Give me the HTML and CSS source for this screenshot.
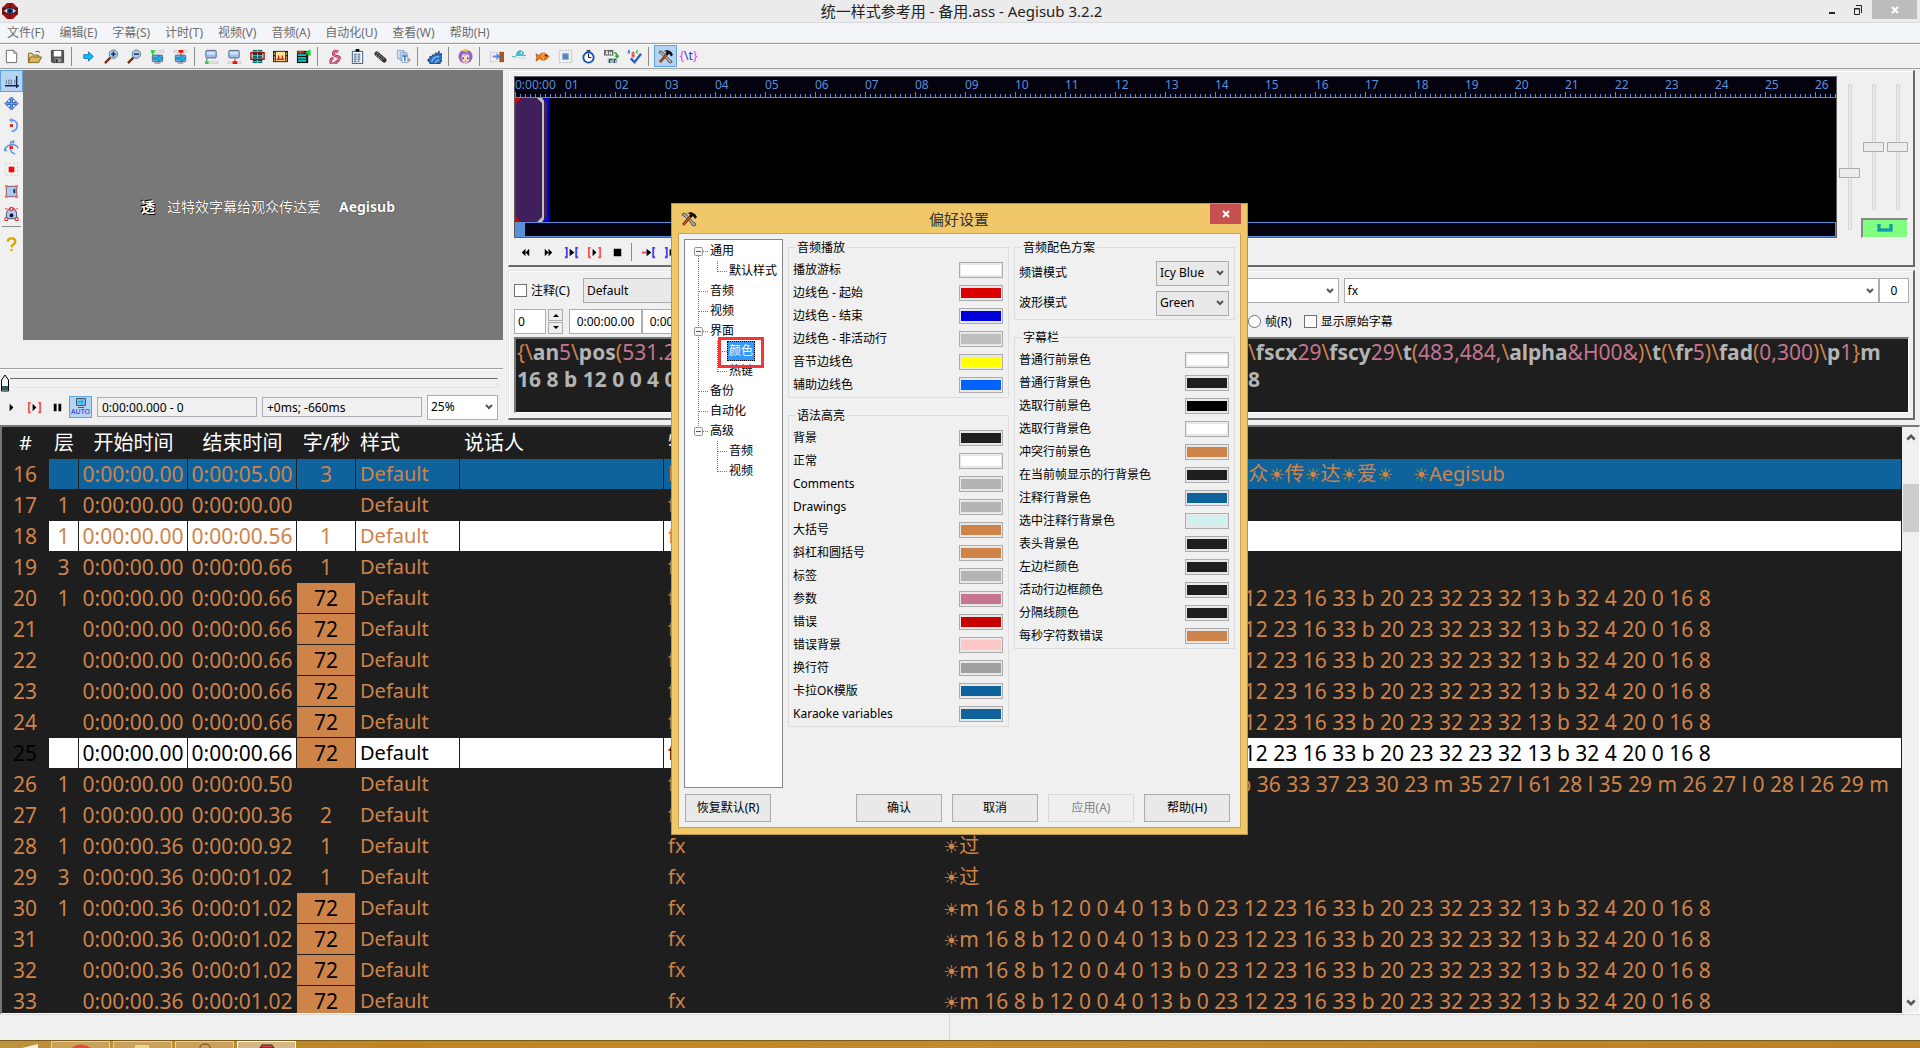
FILE: index.html
```html
<!DOCTYPE html>
<html lang="zh-CN">
<head>
<meta charset="utf-8">
<title>统一样式参考用 - 备用.ass - Aegisub 3.2.2</title>
<link rel="stylesheet" href="styles.css">
</head>
<body>
<svg class="defs" width="0" height="0" aria-hidden="true">
  <defs>
    <symbol id="tools" viewBox="0 0 16 16"><path d="M2 2l3 1 7 8 2 1 1 2-2 1-2-1-1-2-7-7-2-1z" fill="#aaa" stroke="#555"/><path d="M9 6L2 14" stroke="#8a3b12" stroke-width="3"/><path d="M9 6L2 14" stroke="#c4622a"/><path d="M6 2l4-1 4 2 2 3-2 2-2-3-2 2-2-2 1-2z" fill="#111"/></symbol>
    <symbol id="screen" viewBox="0 0 16 16"><rect x="2" y="1.500" width="11" height="8" rx="1" fill="#9fc0ea" stroke="#4d6184"/><path d="M3 3h9v3H3z" fill="#cfe2fa"/></symbol>
    <symbol id="vid" viewBox="0 0 16 16"><rect x="2.500" y="6.500" width="11" height="7" rx="1" fill="#7ba9e0" stroke="#4d6184"/><path d="M4 9h5V7l4 3-4 3v-2H4z" fill="#0cf" stroke="#047" stroke-width=".5"/><path d="M5 15h6" stroke="#667" /></symbol>
    <symbol id="chev" viewBox="0 0 8 8"><path d="M1 2l3 3 3-3" fill="none" stroke="#555" stroke-width="2"/></symbol>
    <symbol id="root" viewBox="0 0 25 20"><path d="M13.500 11v9M18 10.500h6" stroke="#777" stroke-dasharray="1 1"/><rect x="9.500" y="6.500" width="8" height="8" rx="1" fill="#f6f6f6" stroke="#919191"/><path d="M11 10.500h5" stroke="#3a56b0"/></symbol>
    <symbol id="rootm" viewBox="0 0 25 20"><path d="M13.500 0v20M18 10.500h6" stroke="#777" stroke-dasharray="1 1"/><rect x="9.500" y="6.500" width="8" height="8" rx="1" fill="#f6f6f6" stroke="#919191"/><path d="M11 10.500h5" stroke="#3a56b0"/></symbol>
    <symbol id="roote" viewBox="0 0 25 20"><path d="M13.500 0v6M18 10.500h6" stroke="#777" stroke-dasharray="1 1"/><rect x="9.500" y="6.500" width="8" height="8" rx="1" fill="#f6f6f6" stroke="#919191"/><path d="M11 10.500h5" stroke="#3a56b0"/></symbol>
    <symbol id="leaf" viewBox="0 0 25 20"><path d="M13.500 0v20M14 10.500h9" stroke="#777" stroke-dasharray="1 1"/></symbol>
    <symbol id="subm" viewBox="0 0 44 20"><path d="M13.500 0v20M32.500 0v20M33 10.500h9" stroke="#777" stroke-dasharray="1 1"/></symbol>
    <symbol id="sube" viewBox="0 0 44 20"><path d="M13.500 0v20M32.500 0v11M33 10.500h9" stroke="#777" stroke-dasharray="1 1"/></symbol>
    <symbol id="freem" viewBox="0 0 44 20"><path d="M32.500 0v20M33 10.500h9" stroke="#777" stroke-dasharray="1 1"/></symbol>
    <symbol id="freee" viewBox="0 0 44 20"><path d="M32.500 0v11M33 10.500h9" stroke="#777" stroke-dasharray="1 1"/></symbol>
  </defs>
</svg>

<header class="titlebar">
  <svg class="appicon" viewBox="0 0 16 16"><path d="M5 0h6l5 5v6l-5 5H5l-5-5V5z" fill="#a01414"/><path d="M8 0v16M0 5l16 6M0 11l16-6" stroke="#500"/><path d="M1 8q7-7 14 0-7 6-14 0z" fill="#cdd3e4" stroke="#311"/><circle cx="8" cy="8" r="3" fill="#124a9c"/><circle cx="8" cy="8" r="1.500"/></svg>
  <h1>统一样式参考用 - 备用.ass - Aegisub 3.2.2</h1>
  <div class="winctl">
    <button aria-label="最小化"><svg viewBox="0 0 12 14"><path d="M3 10h6" stroke="#222" stroke-width="2"/></svg></button>
    <button aria-label="还原"><svg viewBox="0 0 12 14"><path d="M2.500 5.500h5v6h-5zM2 6h6M4 2.500h5.500V10" fill="none" stroke="#222"/></svg></button>
    <button class="shut" aria-label="关闭"><svg viewBox="0 0 12 14"><path d="M3 4l6 6M9 4l-6 6" stroke="#fff" stroke-width="2"/></svg></button>
  </div>
</header>

<nav class="menubar">
  <button>文件(F)</button><button>编辑(E)</button><button>字幕(S)</button><button>计时(T)</button><button>视频(V)</button><button>音频(A)</button><button>自动化(U)</button><button>查看(W)</button><button>帮助(H)</button>
</nav>

<div class="toolbar" role="toolbar">
  <button aria-label="新建"><svg viewBox="0 0 16 16"><path d="M2.500 1.500h8l3 3v10h-11z" fill="#fff" stroke="#666"/><path d="M10.500 1.500v3h3" fill="#ddd" stroke="#666"/></svg></button>
  <button aria-label="打开"><svg viewBox="0 0 16 16"><path d="M1.500 14.500v-10h4l1 2h6v3" fill="#e9cf85" stroke="#7a6223"/><path d="M1.500 14.500l2-6h12l-3 6z" fill="#dcb654" stroke="#7a6223"/><path d="M9 3q3-2 5 1" fill="none" stroke="#555"/></svg></button>
  <button aria-label="保存"><svg viewBox="0 0 16 16"><path d="M1.500 1.500h13v13h-12l-1-1z" fill="#555" stroke="#444"/><path d="M4 2h8v6H4z" fill="#fff"/><path d="M5 10h7v4H5z" fill="#999"/><path d="M6 11h2v3H6z" fill="#222"/></svg></button>
  <i class="sep"></i>
  <button aria-label="跳转"><svg viewBox="0 0 16 16"><path d="M3 6h5V3l5 5-5 5v-3H3z" fill="#00c3ff" stroke="#1878b8"/></svg></button>
  <button aria-label="放大"><svg viewBox="0 0 16 16"><path d="M7 9l-6 6" stroke="#7a2d12" stroke-width="2.500"/><circle cx="10" cy="5.500" r="4.500" fill="#a8c8f0" stroke="#678"/><path d="M7.500 5.500h5M10 3v5" stroke="#124" stroke-width="1.500"/></svg></button>
  <button aria-label="缩小"><svg viewBox="0 0 16 16"><path d="M7 9l-6 6" stroke="#7a2d12" stroke-width="2.500"/><circle cx="10" cy="5.500" r="4.500" fill="#a8c8f0" stroke="#678"/><path d="M7.500 5.500h5" stroke="#124" stroke-width="1.500"/></svg></button>
  <button aria-label="视频开始"><svg viewBox="0 0 16 16"><use href="#vid"/><path d="M1 1h4v3H1zM2 4h2v2H2z" fill="#2d3"/><path d="M6 1.500h9v2H6z" fill="none" stroke="#ccc"/></svg></button>
  <button aria-label="视频结束"><svg viewBox="0 0 16 16"><use href="#vid"/><path d="M1 1.500h14v2H1z" fill="none" stroke="#ccc"/><path d="M6 1h5v3H6zM8 4h1v3H8z" fill="#e11"/></svg></button>
  <i class="sep"></i>
  <button aria-label="开始对齐视频"><svg viewBox="0 0 16 16"><use href="#screen"/><path d="M3 10v3" stroke="#555"/><path d="M1 13h4v3H1z" fill="#2d3"/><path d="M6 13.500h9v2H6z" fill="none" stroke="#ccc"/></svg></button>
  <button aria-label="结束对齐视频"><svg viewBox="0 0 16 16"><use href="#screen"/><path d="M1 13.500h14v2H1z" fill="none" stroke="#ccc"/><path d="M6 13h5v3H6zM8 10h1v3H8z" fill="#e11"/></svg></button>
  <button aria-label="选取可见行"><svg viewBox="0 0 16 16"><path d="M3 1h10v14H3z" fill="#111"/><path d="M3 2.500h10M3 7h10M3 10h10M3 13.500h10" stroke="#0cc" stroke-width="2"/><path d="M8 1v14" stroke="#6e4"/><path d="M1 4h14v7H1z" fill="none" stroke="#a11" stroke-width="1.500"/></svg></button>
  <button aria-label="对齐场景"><svg viewBox="0 0 16 16"><path d="M0 2h16v12H0z" fill="#222"/><path d="M3 3h10v10H3z" fill="#fbe29a"/><path d="M1 4h1v2H1zM1 8h1v2H1zM1 11h1v2H1zM14 4h1v2h-1zM14 8h1v2h-1zM14 11h1v2h-1z" fill="#fd8"/><path d="M4 11h8M6 7v5M10 7v5" stroke="#d22" stroke-width="1.500"/></svg></button>
  <button aria-label="平移"><svg viewBox="0 0 16 16"><path d="M1 2h12v13H1z" fill="#111"/><path d="M2 6.500h9M2 9.500h9M2 12.500h9" stroke="#0cc" stroke-width="2"/><path d="M1 2h8v3H1z" fill="#d12"/><path d="M10 4l5-3v6zM5 2v3" fill="#1c3" stroke="#1c3"/></svg></button>
  <i class="sep"></i>
  <button aria-label="样式管理器"><svg viewBox="0 0 16 16"><path d="M12 3q-4-2-5 1t4 4-1 6-6-1q0-3 3-3" fill="none" stroke="#b23a60" stroke-width="3"/><path d="M12 3q-4-2-5 1t4 4-1 6-6-1q0-3 3-3" fill="none" stroke="#f28cab"/></svg></button>
  <button aria-label="脚本属性"><svg viewBox="0 0 16 16"><path d="M2.500 2.500h11v13h-11z" fill="#fff" stroke="#357"/><path d="M6 0h4v3H6z"/><path d="M4 5.500h8M4 7.500h8M4 9.500h8M4 11.500h8M4 13.500h6" stroke="#147" stroke-dasharray="3 1"/></svg></button>
  <button aria-label="附件"><svg viewBox="0 0 16 16"><path d="M4 5l8 7" stroke="#333" stroke-width="5" stroke-linecap="round"/><path d="M4 4l8 7M3 6l7 6" stroke="#bbb" stroke-dasharray="2 1"/></svg></button>
  <button aria-label="字体收集"><svg viewBox="0 0 16 16"><path d="M1.500 1.500h7v9h-7zM4.500 3.500h7v9h-7z" fill="#d6e4f8" stroke="#8ac"/><path d="M6.500 5.500h6v9h-6z" fill="#f4f8ff" stroke="#8ac"/><path d="M7 7.500h5M9.500 7v6" stroke="#36c" stroke-width="1.500"/><path d="M13 9l3 3-3 2z" fill="#999"/></svg></button>
  <i class="sep"></i>
  <button aria-label="自动化"><svg viewBox="0 0 16 16"><path d="M1 11l2-1 0-2 2 0 1-2 2 1 1-3 2 1 2-3 0 3 3 0-1 3 2 1-2 2 1 2-2 1v2H3l0-2-2-1z" fill="#2a6fc4" stroke="#124" stroke-width=".7"/><path d="M5 14q1-6 8-6M9 15q0-3 4-3" fill="none" stroke="#7db6f4" stroke-width="1.500"/></svg></button>
  <i class="sep"></i>
  <button aria-label="助手"><svg viewBox="0 0 16 16"><circle cx="8" cy="8" r="7.500" fill="#8e67c6"/><path d="M4 1h8l-2 2H6z" fill="#ecc23e"/><path d="M4 8q0-3 4-3t4 3v3q-1 4-4 4t-4-4z" fill="#fbdac8"/><path d="M3 7q5 0 6-4 1 3 4 4l-3-1-2 1z" fill="#b596e4"/><path d="M5.500 9v2M10.500 9v2" stroke="#412a75" stroke-width="1.500"/><path d="M7 13h2" stroke="#d33"/></svg></button>
  <i class="sep"></i>
  <button aria-label="平移时间"><svg viewBox="0 0 16 16"><path d="M1.500 3v11M2 3.500h7M2 13.500h7" stroke="#aaa" stroke-dasharray="1 1"/><path d="M4 7h4V4l4 4-4 4V9H4z" fill="#4d8ff0"/><path d="M11 3h5v11h-5z" fill="#a4562c"/></svg></button>
  <button aria-label="时间后处理"><svg viewBox="0 0 16 16"><path d="M0 8q5 1 5-3 1-4 5-3 3 1 2 4-3-2-2 1h5" fill="#33c5cb" stroke="#1898a5" stroke-width=".7"/><circle cx="10" cy="4" r="1" fill="#fff"/><path d="M1 9.500h14" stroke="#bde"/></svg></button>
  <button aria-label="卡拉OK计时"><svg viewBox="0 0 16 16"><path d="M1 5l3 2q4-5 9-1l2 2-2 2q-4 4-8 0l-4 3 1-4z" fill="#ef7b18" stroke="#a54500" stroke-width=".7"/><path d="M9 5q-2 3 0 6" stroke="#fc6" fill="none"/><circle cx="12" cy="7" r="1"/></svg></button>
  <button aria-label="重采样"><svg viewBox="0 0 16 16"><path d="M1.500 1.500h13v13h-13z" fill="none" stroke="#bbb" stroke-dasharray="2 1"/><path d="M5 5h6v6H5z" fill="#4d83d5" stroke="#8ab" /></svg></button>
  <button aria-label="计时后处理"><svg viewBox="0 0 16 16"><circle cx="8" cy="9" r="5.500" fill="#fff" stroke="#1452b5" stroke-width="2"/><path d="M8 5v4h3" fill="none" stroke="#000"/><path d="M6 1h4v2H6z" fill="#444"/></svg></button>
  <button aria-label="翻译助手"><svg viewBox="0 0 16 16"><path d="M0 1h10v6H0z" fill="#666"/><path d="M2 6l1-4 1 4M6 6V3l2 3V3" stroke="#fff" fill="none"/><path d="M4 10h10v5H4z" fill="#9bb"/><path d="M6 15v-4h3M11 15v-4h2" stroke="#233" fill="none"/><path d="M11 4q3 0 3 4M12 7l2 2 2-2" stroke="#2a3" fill="none" stroke-width="1.500"/></svg></button>
  <button aria-label="拼写检查"><svg viewBox="0 0 16 16"><path d="M1 5l1-4 1 4" stroke="#27c" fill="none"/><path d="M5.500 3.500v5h2v-2h-2 2v-3z" stroke="#d33" fill="none"/><path d="M12 2q-3-1-2 2 1 1 2 0" stroke="#2a3" fill="none"/><path d="M4 10l4 4 7-9" fill="none" stroke="#2461c0" stroke-width="2.500"/></svg></button>
  <i class="sep"></i>
  <button class="on" aria-label="选项"><svg><use href="#tools"/></svg></button>
  <button class="tagbtn">{<b>\t</b>}</button>
</div>

<main class="work">
  <section class="video">
    <div class="vrow">
      <div class="vtools">
        <button class="on" aria-label="标准"><svg viewBox="0 0 16 16"><path d="M1 12.500h15M13.500 2v13" stroke="#125" stroke-width="1.500"/><path d="M2.500 6v5M5 6.500h3v4H5zM11.500 6v5" fill="none" stroke="#567" stroke-width=".8"/></svg></button>
        <button aria-label="拖动"><svg viewBox="0 0 16 16"><path d="M8 1l3 3H9v3h3V5l3 3-3 3V9H9v3h2l-3 3-3-3h2V9H4v2L1 8l3-3v2h3V4H5z" fill="#6fa0ef" stroke="#2a5bb5"/></svg></button>
        <button aria-label="旋转Z"><svg viewBox="0 0 16 16"><path d="M7 2q7 0 7 6t-6 6" fill="none" stroke="#6d9ce8" stroke-width="2"/><path d="M9 0L5 2l4 3" fill="#6d9ce8"/><path d="M6.500 6.500h3v3h-3z" fill="#e11"/></svg></button>
        <button aria-label="旋转XY"><svg viewBox="0 0 16 16"><path d="M1 10q2-5 8-5 5 0 6 4M9 1Q4 6 8 13l4 2" fill="none" stroke="#6993cf" stroke-width="1.500"/><path d="M6 2l5-2v4zM0 8v4h4z" fill="#6993cf"/><path d="M6.500 6.500h3v3h-3z" fill="#e11"/></svg></button>
        <button aria-label="缩放"><svg viewBox="0 0 16 16"><path d="M1.500 1.500h13v13h-13z" fill="none" stroke="#ccc" stroke-dasharray="2 2"/><path d="M5 5h6v6H5z" fill="#f00"/></svg></button>
        <button aria-label="矩形裁剪"><svg viewBox="0 0 16 16"><path d="M2.500 2.500h11v11h-11z" fill="#a8cbfa" stroke="#8b5a50"/><path d="M12 5q-3 0-2 2-1 3 2 3z" fill="#234"/><path d="M1 1h3v3H1zM12 1h3v3h-3zM1 12h3v3H1zM12 12h3v3h-3z" fill="#ff6f6f"/></svg></button>
        <button aria-label="矢量裁剪"><svg viewBox="0 0 16 16"><path d="M2.500 13.500V8q1-5 5.500-5 5 0 5.500 5v5.500z" fill="#a8cbfa" stroke="#446"/><path d="M1 3h14" stroke="#e33" stroke-dasharray="3 1"/><path d="M6.500 1.500h3v3h-3zM1 12.500h3v3H1zM12 12.500h3v3h-3z" fill="#fff" stroke="#e11"/><circle cx="8" cy="10" r="2" fill="#112"/></svg></button>
        <i class="hsep"></i>
        <button class="help" aria-label="帮助"><svg viewBox="0 0 16 16"><path d="M4 5q0-3.500 4-3.500T12 5q0 2-2 3-2 1-2 3M8 13v2" fill="none" stroke="#d9a400" stroke-width="2.500"/></svg></button>
      </div>
      <div class="canvas"><p><b>透</b><span>过特效字幕给观众传达爱</span><span class="lat">Aegisub</span></p></div>
    </div>
    <div class="seek">
      <svg viewBox="0 0 10 18" width="10" height="18"><path d="M1.500 6L5 1l3.500 5v11h-7z" fill="#f4f4f4" stroke="#000"/><path d="M2 12h6v4H2z" fill="#2f5f58"/></svg>
      <div class="track"></div>
    </div>
    <div class="vctl">
      <button aria-label="播放"><svg viewBox="0 0 16 16"><path d="M6 4l4 4-4 4z"/></svg></button>
      <button aria-label="播放当前行"><svg viewBox="0 0 16 16"><path d="M4 3H2v10h2M12 3h2v10h-2" fill="none" stroke="#f55" stroke-width="2"/><path d="M6 4l4 4-4 4z"/></svg></button>
      <button aria-label="暂停"><svg viewBox="0 0 16 16"><path d="M4 4h3v8H4zM9 4h3v8H9z"/></svg></button>
      <button class="on" aria-label="自动滚动"><svg viewBox="0 0 12 10"><path d="M1.500 .500h9v7h-9z" fill="#8db4e3" stroke="#456"/><path d="M3 3h3V1l3 3-3 3V5H3z" fill="#00c3ee"/><path d="M3 9.500h6" stroke="#456"/></svg><small>AUTO</small></button>
      <input class="ro" value="0:00:00.000 - 0" readonly aria-label="时间">
      <input class="ro" value="+0ms; -660ms" readonly aria-label="相对时间">
      <div class="pick zoom"><select aria-label="缩放"><option>25%</option></select><svg><use href="#chev"/></svg></div>
    </div>
  </section>

  <div class="right">
    <section class="panel audio">
      <div class="arow">
        <div class="wave">
          <div class="ruler"><span>0:00:00</span><span>01</span><span>02</span><span>03</span><span>04</span><span>05</span><span>06</span><span>07</span><span>08</span><span>09</span><span>10</span><span>11</span><span>12</span><span>13</span><span>14</span><span>15</span><span>16</span><span>17</span><span>18</span><span>19</span><span>20</span><span>21</span><span>22</span><span>23</span><span>24</span><span>25</span><span>26</span></div>
          <svg class="sel" viewBox="0 0 34 124" width="34" height="124"><path d="M0 0h34v124H0z" fill="#0000d8"/><path d="M0 0h28l4 5v114l-4 5H0z" fill="#3f1f5c"/><path d="M0 0h6L1 6v112l5 6H0z" fill="#d80000"/><path d="M22 0h5l2 3v118l-2 3h-5l5-5V5z" fill="#c0c0c0"/></svg>
          <div class="ascroll"><i></i></div>
        </div>
        <div class="sliders">
          <svg viewBox="0 0 70 162" width="70" height="162"><path d="M9.500 8.500h3v145h-3zM33.500 8.500h3v125h-3zM57.500 8.500h3v125h-3z" fill="#e7eaea" stroke="#d6d6d6"/><path d="M.5 92.500h20v9H.5zM24.500 66.500h20v9h-20zM48.500 66.500h20v9h-20z" fill="#ececec" stroke="#acacac"/></svg>
          <button class="link" aria-label="联动"><svg viewBox="0 0 16 10" width="16" height="10"><path d="M2 1v6h12V1" fill="none" stroke="#067a8c" stroke-width="3"/><path d="M2 1v6h12V1" fill="none" stroke="#00c8f0"/></svg></button>
        </div>
      </div>
      <div class="actl">
        <button aria-label="上一行"><svg viewBox="0 0 16 16"><path d="M8 4L4 8l4 4zM12 4L8 8l4 4z"/></svg></button>
        <button aria-label="下一行"><svg viewBox="0 0 16 16"><path d="M4 4l4 4-4 4zM8 4l4 4-4 4z"/></svg></button>
        <button aria-label="播放选区"><svg viewBox="0 0 16 16"><path d="M1 3h2v10H1M15 3h-2v10h2" fill="none" stroke="#44f" stroke-width="2"/><path d="M6 4l5 4-5 4z"/></svg></button>
        <button aria-label="播放行"><svg viewBox="0 0 16 16"><path d="M4 3H2v10h2M12 3h2v10h-2" fill="none" stroke="#f55" stroke-width="2"/><path d="M6 4l4 4-4 4z"/></svg></button>
        <button aria-label="停止"><svg viewBox="0 0 16 16"><path d="M4 4h8v8H4z"/></svg></button>
        <i class="sep"></i>
        <button aria-label="播放前段"><svg viewBox="0 0 16 16"><path d="M1 8h5" stroke="#f44" stroke-width="2"/><path d="M6 4l5 4-5 4z"/><path d="M15 3h-2v10h2" fill="none" stroke="#44f" stroke-width="2"/></svg></button>
        <button aria-label="播放后段"><svg viewBox="0 0 16 16"><path d="M1 3h2v10H1" fill="none" stroke="#44f" stroke-width="2"/><path d="M6 8h8" stroke="#f44" stroke-width="2"/><path d="M6 4l5 4-5 4z"/></svg></button>
      </div>
    </section>

    <section class="panel edit">
      <div class="erow">
        <label class="tick cmt"><input type="checkbox">注释(C)</label>
        <div class="pick style"><select aria-label="样式"><option>Default</option></select></div>
        <div class="pick combo"><input aria-label="说话人"><svg><use href="#chev"/></svg></div>
        <div class="pick combo effect"><input value="fx" aria-label="特效"><svg><use href="#chev"/></svg></div>
        <input class="num" value="0" aria-label="字符数">
      </div>
      <div class="erow">
        <div class="times">
          <input class="layer" value="0" aria-label="层">
          <div class="spin"><button aria-label="增加"><svg viewBox="0 0 6 4"><path d="M0 4l3-3 3 3z"/></svg></button><button aria-label="减少"><svg viewBox="0 0 6 4"><path d="M0 0l3 3 3-3z"/></svg></button></div>
          <input class="time" value="0:00:00.00" aria-label="开始时间"><input class="time" value="0:00:00.66" aria-label="结束时间">
        </div>
        <label class="tick"><input type="radio" name="unit">帧(R)</label>
        <label class="tick"><input type="checkbox">显示原始字幕</label>
      </div>
      <div class="code" role="textbox" aria-label="字幕文本" contenteditable="true" spellcheck="false">
        <div class="ln"><span><u>{\</u>an<s>5</s><u>\</u>pos<u>(</u><s>531.25,240</s><u>)</u></span><span><u>\</u>fscx<s>29</s><u>\</u>fscy<s>29</s><u>\</u>t<u>(</u><s>483,484,</s><u>\</u>alpha<s>&amp;H00&amp;</s><u>)\</u>t<u>(\</u>fr<s>5</s><u>)\</u>fad<u>(</u><s>0,300</s><u>)\</u>p<s>1</s><u>}</u>m</span></div>
        <div class="ln"><span>16 8 b 12 0 0 4 0 13 b 0 23 12 23 16 33 b 20 23 32 23 32 13 b</span><span>8</span></div>
      </div>
    </section>
  </div>
</main>

<section class="grid">
  <div class="tblwrap">
  <table>
    <colgroup><col class="c1"><col class="c2"><col class="c3"><col class="c3"><col class="c5"><col class="c6"><col class="c7"><col class="c8"><col></colgroup>
    <thead><tr><th>#</th><th>层</th><th>开始时间</th><th>结束时间</th><th>字/秒</th><th>样式</th><th>说话人</th><th>特效</th><th>文本</th></tr></thead>
    <tbody>
    <tr class="comment"><td>16</td><td></td><td>0:00:00.00</td><td>0:00:05.00</td><td>3</td><td>Default</td><td></td><td>karaoke</td><td class="han"><i>☀</i>透<i>☀</i>过<i>☀</i>特<i>☀</i>效<i>☀</i>字<i>☀</i>幕<i>☀</i>给<i>☀</i>观<i>☀</i>众<i>☀</i>传<i>☀</i>达<i>☀</i>爱<i>☀</i>　<i>☀</i>Aegisub</td></tr>
    <tr><td>17</td><td>1</td><td>0:00:00.00</td><td>0:00:00.00</td><td></td><td>Default</td><td></td><td>fx</td><td class="han"><i>☀</i></td></tr>
    <tr class="picked"><td>18</td><td>1</td><td>0:00:00.00</td><td>0:00:00.56</td><td>1</td><td>Default</td><td></td><td>fx</td><td class="han"><i>☀</i>透</td></tr>
    <tr><td>19</td><td>3</td><td>0:00:00.00</td><td>0:00:00.66</td><td>1</td><td>Default</td><td></td><td>fx</td><td class="han"><i>☀</i>透</td></tr>
    <tr><td>20</td><td>1</td><td>0:00:00.00</td><td>0:00:00.66</td><td class="hot">72</td><td>Default</td><td></td><td>fx</td><td><i>☀</i>m 16 8 b 12 0 0 4 0 13 b 0 23 12 23 16 33 b 20 23 32 23 32 13 b 32 4 20 0 16 8</td></tr>
    <tr><td>21</td><td></td><td>0:00:00.00</td><td>0:00:00.66</td><td class="hot">72</td><td>Default</td><td></td><td>fx</td><td><i>☀</i>m 16 8 b 12 0 0 4 0 13 b 0 23 12 23 16 33 b 20 23 32 23 32 13 b 32 4 20 0 16 8</td></tr>
    <tr><td>22</td><td></td><td>0:00:00.00</td><td>0:00:00.66</td><td class="hot">72</td><td>Default</td><td></td><td>fx</td><td><i>☀</i>m 16 8 b 12 0 0 4 0 13 b 0 23 12 23 16 33 b 20 23 32 23 32 13 b 32 4 20 0 16 8</td></tr>
    <tr><td>23</td><td></td><td>0:00:00.00</td><td>0:00:00.66</td><td class="hot">72</td><td>Default</td><td></td><td>fx</td><td><i>☀</i>m 16 8 b 12 0 0 4 0 13 b 0 23 12 23 16 33 b 20 23 32 23 32 13 b 32 4 20 0 16 8</td></tr>
    <tr><td>24</td><td></td><td>0:00:00.00</td><td>0:00:00.66</td><td class="hot">72</td><td>Default</td><td></td><td>fx</td><td><i>☀</i>m 16 8 b 12 0 0 4 0 13 b 0 23 12 23 16 33 b 20 23 32 23 32 13 b 32 4 20 0 16 8</td></tr>
    <tr class="picked active"><td>25</td><td></td><td>0:00:00.00</td><td>0:00:00.66</td><td class="hot">72</td><td>Default</td><td></td><td>fx</td><td><i>☀</i>m 16 8 b 12 0 0 4 0 13 b 0 23 12 23 16 33 b 20 23 32 23 32 13 b 32 4 20 0 16 8</td></tr>
    <tr><td>26</td><td>1</td><td>0:00:00.00</td><td>0:00:00.50</td><td></td><td>Default</td><td></td><td>fx</td><td><i>☀</i>m 30 23 b 23 30 23 33 27 36 b 36 33 37 23 30 23 m 35 27 l 61 28 l 35 29 m 26 27 l 0 28 l 26 29 m</td></tr>
    <tr><td>27</td><td>1</td><td>0:00:00.00</td><td>0:00:00.36</td><td>2</td><td>Default</td><td></td><td>fx</td><td class="han"><i>☀</i>过</td></tr>
    <tr><td>28</td><td>1</td><td>0:00:00.36</td><td>0:00:00.92</td><td>1</td><td>Default</td><td></td><td>fx</td><td class="han"><i>☀</i>过</td></tr>
    <tr><td>29</td><td>3</td><td>0:00:00.36</td><td>0:00:01.02</td><td>1</td><td>Default</td><td></td><td>fx</td><td class="han"><i>☀</i>过</td></tr>
    <tr><td>30</td><td>1</td><td>0:00:00.36</td><td>0:00:01.02</td><td class="hot">72</td><td>Default</td><td></td><td>fx</td><td><i>☀</i>m 16 8 b 12 0 0 4 0 13 b 0 23 12 23 16 33 b 20 23 32 23 32 13 b 32 4 20 0 16 8</td></tr>
    <tr><td>31</td><td></td><td>0:00:00.36</td><td>0:00:01.02</td><td class="hot">72</td><td>Default</td><td></td><td>fx</td><td><i>☀</i>m 16 8 b 12 0 0 4 0 13 b 0 23 12 23 16 33 b 20 23 32 23 32 13 b 32 4 20 0 16 8</td></tr>
    <tr><td>32</td><td></td><td>0:00:00.36</td><td>0:00:01.02</td><td class="hot">72</td><td>Default</td><td></td><td>fx</td><td><i>☀</i>m 16 8 b 12 0 0 4 0 13 b 0 23 12 23 16 33 b 20 23 32 23 32 13 b 32 4 20 0 16 8</td></tr>
    <tr><td>33</td><td></td><td>0:00:00.36</td><td>0:00:01.02</td><td class="hot">72</td><td>Default</td><td></td><td>fx</td><td><i>☀</i>m 16 8 b 12 0 0 4 0 13 b 0 23 12 23 16 33 b 20 23 32 23 32 13 b 32 4 20 0 16 8</td></tr>
    </tbody>
  </table>
  </div>
  <div class="vbar"><svg class="up"><use href="#chev"/></svg><i></i><svg><use href="#chev"/></svg></div>
</section>

<footer class="status"><span></span><span></span></footer>
<div class="taskbar">
  <svg viewBox="0 0 20 7"><path d="M2 7l16-4v4z" fill="#f5efe0"/></svg>
  <i><svg viewBox="0 0 20 6"><path d="M0 6q10-7 20 0z" fill="#e2493b"/></svg></i>
  <i><svg viewBox="0 0 20 6"><path d="M2 3h14v3H2z" fill="#ecd48d"/></svg></i>
  <i><svg viewBox="0 0 20 6"><path d="M5 6q0-4 5-4t5 4" fill="none" stroke="#5b4a2a"/></svg></i>
  <i class="cur"><svg viewBox="0 0 20 6"><path d="M3 6l2-3h10l2 3z" fill="#d8464a" stroke="#3a1a1a"/></svg></i>
</div>

<div class="dialog" role="dialog" aria-labelledby="dlgtitle">
  <div class="dhead"><svg><use href="#tools"/></svg><h2 id="dlgtitle">偏好设置</h2><button aria-label="关闭"><svg viewBox="0 0 12 12"><path d="M3 3l6 6M9 3l-6 6" stroke="#fff" stroke-width="2"/></svg></button></div>
  <div class="client">
    <div class="body">
      <ul class="tree">
        <li><svg><use href="#root"/></svg><span>通用</span></li>
        <li class="sub"><svg><use href="#sube"/></svg><span>默认样式</span></li>
        <li><svg><use href="#leaf"/></svg><span>音频</span></li>
        <li><svg><use href="#leaf"/></svg><span>视频</span></li>
        <li><svg><use href="#rootm"/></svg><span>界面</span></li>
        <li class="sub marked"><svg><use href="#subm"/></svg><span>颜色</span></li>
        <li class="sub"><svg><use href="#sube"/></svg><span>热键</span></li>
        <li><svg><use href="#leaf"/></svg><span>备份</span></li>
        <li><svg><use href="#leaf"/></svg><span>自动化</span></li>
        <li><svg><use href="#roote"/></svg><span>高级</span></li>
        <li class="sub"><svg><use href="#freem"/></svg><span>音频</span></li>
        <li class="sub"><svg><use href="#freee"/></svg><span>视频</span></li>
      </ul>
      <div class="col">
        <fieldset><legend>音频播放</legend>
          <label>播放游标<input type="color" value="#ffffff"></label>
          <label>边线色 - 起始<input type="color" value="#d80000"></label>
          <label>边线色 - 结束<input type="color" value="#0000d8"></label>
          <label>边线色 - 非活动行<input type="color" value="#bebebe"></label>
          <label>音节边线色<input type="color" value="#ffff00"></label>
          <label>辅助边线色<input type="color" value="#0062ff"></label>
        </fieldset>
        <fieldset><legend>语法高亮</legend>
          <label>背景<input type="color" value="#1e1e1e"></label>
          <label>正常<input type="color" value="#ffffff"></label>
          <label>Comments<input type="color" value="#b4b4b4"></label>
          <label>Drawings<input type="color" value="#b4b4b4"></label>
          <label>大括号<input type="color" value="#ce8349"></label>
          <label>斜杠和圆括号<input type="color" value="#ce8349"></label>
          <label>标签<input type="color" value="#b4b4b4"></label>
          <label>参数<input type="color" value="#c5758f"></label>
          <label>错误<input type="color" value="#c80000"></label>
          <label>错误背景<input type="color" value="#ffc8c8"></label>
          <label>换行符<input type="color" value="#a0a0a0"></label>
          <label>卡拉OK模版<input type="color" value="#0f639c"></label>
          <label>Karaoke variables<input type="color" value="#0f639c"></label>
        </fieldset>
      </div>
      <div class="col">
        <fieldset class="schemes"><legend>音频配色方案</legend>
          <label>频谱模式<span class="pick"><select><option>Icy Blue</option></select><svg><use href="#chev"/></svg></span></label>
          <label>波形模式<span class="pick"><select><option>Green</option></select><svg><use href="#chev"/></svg></span></label>
        </fieldset>
        <fieldset><legend>字幕栏</legend>
          <label>普通行前景色<input type="color" value="#ffffff"></label>
          <label>普通行背景色<input type="color" value="#1e1e1e"></label>
          <label>选取行前景色<input type="color" value="#000000"></label>
          <label>选取行背景色<input type="color" value="#ffffff"></label>
          <label>冲突行前景色<input type="color" value="#ce8349"></label>
          <label>在当前帧显示的行背景色<input type="color" value="#1e1e1e"></label>
          <label>注释行背景色<input type="color" value="#0f639c"></label>
          <label>选中注释行背景色<input type="color" value="#d3eeee"></label>
          <label>表头背景色<input type="color" value="#1e1e1e"></label>
          <label>左边栏颜色<input type="color" value="#1e1e1e"></label>
          <label>活动行边框颜色<input type="color" value="#1e1e1e"></label>
          <label>分隔线颜色<input type="color" value="#1e1e1e"></label>
          <label>每秒字符数错误<input type="color" value="#ce8349"></label>
        </fieldset>
      </div>
    </div>
    <div class="btns"><button class="reset">恢复默认(R)</button><button>确认</button><button>取消</button><button disabled>应用(A)</button><button>帮助(H)</button></div>
  </div>
</div>
</body>
</html>
```
FILE: styles.css
```css
*, *::before, *::after { box-sizing: border-box; }
body {
  margin: 0; height: 100vh; overflow: hidden;
  display: flex; flex-direction: column;
  background: #f0f0f0; color: #000;
  font: 12px/16px "Noto Sans", "Noto Sans CJK SC", sans-serif;
}
h1, h2, p, ul { margin: 0; padding: 0; font-weight: normal; }
button, input, select { font: inherit; color: inherit; margin: 0; border-radius: 0; }
button { padding: 0; border: 0; background: none; }
.defs { position: absolute; }

/* window frame */
.titlebar { display: flex; height: 22px; flex: none; background: #ebebeb; align-items: center; }
.appicon { width: 16px; height: 16px; margin: 0 0 0 2px; }
.titlebar h1 { flex: 1; text-align: center; font-size: 15px; line-height: 22px; padding-left: 86px; color: #222; }
.winctl { display: flex; height: 22px; align-items: flex-start; padding-right: 3px; }
.winctl button { width: 26px; height: 19px; }
.winctl .shut { width: 45px; background: #bcbcbc; margin-left: 1px; }
.winctl svg { width: 12px; height: 14px; display: block; margin: 2px auto; }
.menubar { display: flex; flex: none; height: 21px; background: #f4f5f8; border-top: 1px solid #d9dadd; border-bottom: 1px solid #e8e8e8; }
.menubar button { padding: 0 8px 0 7px; color: #6d6d6d; line-height: 19px; }

.toolbar { display: flex; flex: none; height: 26px; border-top: 1px solid #a0a0a0; border-bottom: 1px solid #a0a0a0; box-shadow: inset 0 1px #fff; padding-top: 1px; }
.toolbar button, .vtools button, .vctl button, .actl button { width: 23px; height: 22px; flex: none; display: flex; align-items: center; justify-content: center; }
.toolbar svg, .vtools svg, .vctl button svg, .actl svg { width: 15px; height: 15px; }
.toolbar .on, .vtools .on, .vctl .on { background: #b5d3f3; border: 1px solid #5fa2e4; }
.sep { width: 8px; flex: none; margin: 2px 0; background: linear-gradient(#8c8c8c, #8c8c8c) 2px 0 / 1px 100% no-repeat; }
.toolbar .tagbtn { color: #f3f; }
.tagbtn b { color: #33c; font-weight: normal; }

/* video and audio */
.work { display: flex; flex: none; height: 354px; gap: 5px; padding-right: 5px; margin-top: 1px; }
.video { width: 503px; flex: none; }
.vrow { display: flex; height: 270px; }
.vtools { width: 23px; flex: none; }
.hsep { display: block; height: 1px; margin: 2px 2px 6px; background: #8c8c8c; }
.canvas { flex: 1; background: #787878; color: #fff; display: flex; align-items: center; justify-content: center; padding: 4px 0 0 10px; }
.canvas p { font-size: 14px; text-shadow: 0 0 1px #000; white-space: nowrap; }
.canvas b { margin-right: 12px; text-shadow: 1px 1px #000, -1px -1px #000; }
.canvas .lat { margin-left: 18px; font-weight: bold; }
.seek { display: flex; margin-top: 28px; border-top: 1px solid #a0a0a0; padding: 5px 5px 0 0; height: 28px; box-shadow: inset 0 1px #fff; }
.track { flex: 1; height: 10px; margin-top: 4px; border: 1px solid #e3e3e3; border-top-color: #696969; border-left: 0; }
.vctl { display: flex; padding: 0 5px 0 0; align-items: center; height: 22px; }
.vctl .on { flex-direction: column; }
.vctl .on svg { width: 12px; height: 10px; flex: none; }
.vctl small { font-size: 7px; line-height: 8px; color: #22d; }
.ro { flex: 1; min-width: 0; height: 20px; margin-left: 5px; padding: 0 4px; border: 1px solid #abadb3; background: #f0f0f0; }
.pick { display: flex; align-items: center; height: 25px; border: 1px solid #acacac; background: #fff; }
.pick select, .pick input { appearance: none; flex: 1; min-width: 0; height: 23px; border: 0; background: none; padding: 0 0 0 3px; outline: 0; }
.pick svg { width: 8px; height: 8px; margin: 0 4px 0 -12px; flex: none; }
.zoom { width: 71px; margin-left: 5px; }

.right { flex: 1; min-width: 0; display: flex; flex-direction: column; gap: 3px; }
.panel { border: 1px solid #e3e3e3; border-right: 2px solid #696969; border-bottom: 2px solid #696969; box-shadow: inset 1px 1px #fff; }
.audio { height: 197px; padding: 5px 4px 5px 5px; }
.arow { display: flex; gap: 2px; }
.wave { flex: 1; min-width: 0; height: 162px; border: 1px solid #5d5d5d; background: #000; overflow: hidden; }
.ruler { display: flex; height: 21px; background-color: #05020f; border-bottom: 1px solid #5a90da; color: #5a90da;
  background-image: repeating-linear-gradient(90deg, #5a90da 0 1px, transparent 1px 50px), repeating-linear-gradient(90deg, #5a90da 0 1px, transparent 1px 5px);
  background-size: 100% 5px, 100% 3px; background-position: 0 15px, 0 17px; background-repeat: no-repeat; }
.ruler span { flex: 0 0 50px; }
.sel { display: block; }
.ascroll { height: 15px; border: 1px solid #5a90da; background: #05020f; }
.ascroll i { display: block; height: 13px; width: 9px; background: #5a90da; }
.sliders { width: 70px; flex: none; position: relative; }
.sliders > svg { display: block; }
.link { position: absolute; left: 22px; top: 142px; width: 47px; height: 20px; background: #80ff80; border: 1px solid #fff; border-top: 2px solid #888; border-left: 2px solid #888; }
.actl { display: flex; margin-top: 3px; }

.edit { height: 150px; padding: 7px 4px 5px 5px; }
.erow { display: flex; height: 25px; margin-bottom: 6px; align-items: center; }
.tick { display: flex; align-items: center; gap: 4px; margin-right: 12px; }
.tick input { width: 13px; height: 13px; appearance: none; border: 1px solid #707070; background: #fff; flex: none; }
.tick input[type=radio] { border-radius: 50%; }
.cmt { width: 57px; }
.edit .style { width: 220px; background: #e9e9e9; flex: none; }
.combo { flex: 1; }
.effect { margin-left: 5px; }
.num { width: 30px; height: 25px; border: 1px solid #abadb3; text-align: center; padding: 0; }
.times { width: 734px; flex: none; display: flex; }
.layer { width: 32px; height: 25px; border: 1px solid #abadb3; padding: 0 3px; }
.spin { display: flex; flex-direction: column; gap: 1px; margin: 0 6px 0 2px; }
.spin button { width: 15px; height: 12px; border: 1px solid #acacac; background: #eee; display: flex; align-items: center; justify-content: center; }
.spin svg { width: 6px; height: 4px; }
.time { width: 73px; height: 25px; border: 1px solid #abadb3; text-align: center; padding: 0; }
.code { height: 76px; margin-top: -3px; border: 1px solid #fff; border-top: 2px solid #777; border-left: 2px solid #777; background: #1e1e1e; color: #b4b4b4; padding: 0 1px; font-size: 21px; line-height: 27px; font-weight: bold; white-space: nowrap; overflow: hidden; }
.ln { display: flex; }
.ln span:first-child { flex: 0 0 731px; }
.code u, .code s { text-decoration: none; font-weight: normal; }
.code u { color: #ce8349; }
.code s { color: #c5758f; }

/* subtitle list */
.grid { flex: 1; min-height: 0; display: flex; border: 2px solid #777; border-right: 1px solid #fff; border-bottom: 1px solid #fff; margin-top: 1px; }
.tblwrap { flex: 1; min-width: 0; overflow: hidden; background: #1e1e1e; }
table { width: 100%; table-layout: fixed; border-collapse: separate; border-spacing: 0; font-size: 21px; line-height: 30px; color: #ce8349; }
.c1 { width: 47px; } .c2 { width: 30px; } .c3 { width: 109px; } .c5 { width: 59px; } .c6 { width: 104px; } .c7 { width: 204px; } .c8 { width: 275px; }
th { height: 32px; color: #fff; font-weight: normal; font-size: 20px; }
th, td { padding: 0; text-align: center; overflow: hidden; white-space: nowrap; }
th:nth-child(n+6), td:nth-child(n+6) { text-align: left; padding-left: 4px; }
td { height: 31px; border-bottom: 1px solid #1e1e1e; border-right: 1px solid #1e1e1e; }
td:nth-child(6), td:nth-child(8), .han { font-size: 20px; }
td i { font: normal 18px/20px "DejaVu Sans", sans-serif; }
.comment td:nth-child(n+2) { background: #0f639c; }
.picked td:nth-child(n+2) { background: #fff; }
.active td { color: #000; }
tr .hot.hot { background: #ce8349; color: #000; }
.vbar { width: 17px; flex: none; display: flex; flex-direction: column; align-items: center; padding: 5px 0; }
.vbar svg { width: 10px; height: 10px; }
.vbar .up { transform: rotate(180deg); }
.vbar i { width: 16px; height: 48px; margin: 42px 0 auto; background: #cdcdcd; }

.status { flex: none; height: 26px; display: flex; border-top: 1px solid #d7d7d7; }
.status span { flex: 1; }
.status span:first-child { border-right: 1px solid #d7d7d7; flex: 0 0 950px; }
.taskbar { flex: none; height: 8px; display: flex; gap: 3px; padding-left: 20px; background: linear-gradient(90deg, #bd933e, #bd8526 20%, #c08b2c 50%, #b98226); border-top: 1px solid #7b5a1c; }
.taskbar > svg { width: 20px; height: 7px; margin-right: 8px; }
.taskbar i { width: 59px; border: 1px solid #e8cf98; border-bottom: 0; background: #cba159; }
.taskbar i svg { display: block; width: 20px; height: 6px; margin: 0 auto; }
.taskbar .cur { border-color: #fff; background: #d5b684; }

/* preferences dialog */
.dialog { position: absolute; left: 671px; top: 203px; width: 577px; background: #f0c869; border: 1px solid #b8964c; padding: 0 6px 6px; }
.dhead { display: flex; height: 29px; align-items: center; }
.dhead > svg { width: 16px; height: 16px; margin-left: 3px; }
.dhead h2 { flex: 1; text-align: center; font-size: 15px; padding-left: 11px; color: #333; }
.dhead button { width: 31px; height: 20px; background: #c75050; align-self: flex-start; }
.dhead button svg { width: 12px; height: 12px; display: block; margin: 0 auto; }
.client { border: 1px solid #c9a450; background: #f0f0f0; padding: 5px; }
.body { display: flex; gap: 5px; height: 549px; }
.tree { width: 99px; flex: none; list-style: none; background: #fff; border: 1px solid #828790; padding-top: 1px; }
.tree li { display: flex; height: 20px; line-height: 20px; position: relative; }
.tree svg { width: 25px; height: 20px; flex: none; }
.tree .sub svg { width: 44px; margin-right: -2px; }
.tree .sub span { padding: 0 2px; white-space: nowrap; }
.marked span { background: #39f; color: #fff; outline: 1px dotted #000; outline-offset: -1px; }
.tree .marked { z-index: 1; }
.marked::after { content: ""; position: absolute; left: 33px; top: -4px; width: 46px; height: 31px; border: 3px solid #f43535; }
.col { width: 221px; flex: none; display: flex; flex-direction: column; gap: 9px; }
fieldset { margin: 0; border: 1px solid #dcdcdc; padding: 3px 5px 1px 4px; min-width: 0; }
legend { padding: 0 2px; margin-left: 2px; height: 16px; line-height: 18px; }
fieldset label { display: flex; height: 23px; align-items: center; justify-content: space-between; }
input[type=color] { appearance: none; width: 44px; height: 16px; border: 1px solid #acacac; background: #e8e8e8; padding: 2px 1px; }
::-webkit-color-swatch-wrapper { padding: 0; }
::-webkit-color-swatch { border: 0; border-radius: 0; }
.schemes label { height: 30px; }
.schemes .pick { width: 73px; background: #e9e9e9; }
.btns { display: flex; gap: 10px; padding: 6px 5px 0 1px; }
.btns button { width: 86px; height: 28px; border: 1px solid #acacac; background: #e9e9e9; }
.btns .reset { margin-right: auto; }
.btns button:disabled { color: #838383; background: #efefef; border-color: #d9d9d9; }
```
